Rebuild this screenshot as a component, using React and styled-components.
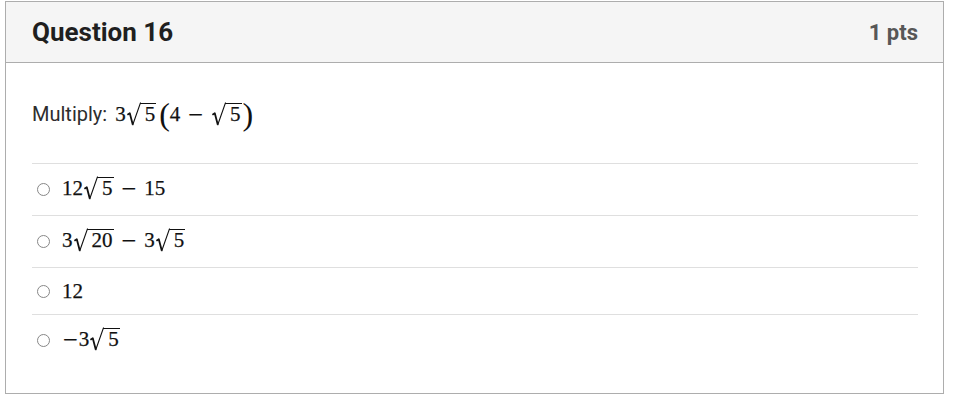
import React from 'react';
import styled, { createGlobalStyle } from 'styled-components';

const GlobalStyle = createGlobalStyle`
  html, body {
    margin: 0;
    padding: 0;
    background: #ffffff;
  }
  body {
    font-family: Roboto, "Liberation Sans", Arial, sans-serif;
    color: #2d2d2d;
  }
`;

// each answer is a list of math pieces: number, square root or binary operator
const ANSWERS = [
  { id: 'a', expr: [['n', '12'], ['sqrt', '5'], ['op', '−'], ['n', '15']] },
  { id: 'b', expr: [['n', '3'], ['sqrt', '20'], ['op', '−'], ['n', '3'], ['sqrt', '5']] },
  { id: 'c', expr: [['n', '12']] },
  { id: 'd', expr: [['neg', '−'], ['n', '3'], ['sqrt', '5']] },
];

function Sqrt({ children }) {
  return (
    <Radical>
      <RadicalSign viewBox="0 0 14 24" aria-hidden="true">
        <path
          d="M0.4 12.8 L2.8 11.2 L5.8 22.8"
          fill="none"
          stroke="#111"
          strokeWidth="1.8"
          strokeLinejoin="round"
        />
        <path d="M5.6 23.2 L13.4 1.1 L14 1.1" fill="none" stroke="#111" strokeWidth="1.1" />
      </RadicalSign>
      <Radicand>{children}</Radicand>
    </Radical>
  );
}

function Expr({ parts }) {
  return (
    <MathText>
      {parts.map(([kind, value], idx) => {
        if (kind === 'sqrt') return <Sqrt key={idx}>{value}</Sqrt>;
        if (kind === 'op') return <BinOp key={idx}>{value}</BinOp>;
        if (kind === 'neg') return <Minus key={idx}>{value}</Minus>;
        return <span key={idx}>{value}</span>;
      })}
    </MathText>
  );
}

export default function App() {
  return (
    <Page>
      <GlobalStyle />
      <Card>
        <Header>
          <Title>Question 16</Title>
          <Points>1 pts</Points>
        </Header>
        <Body>
          <Prompt>
            Multiply:{' '}
            <MathText>
              <span>3</span>
              <Sqrt>5</Sqrt>
              <Paren side="left">(</Paren>
              <span>4</span>
              <BinOp>−</BinOp>
              <Sqrt>5</Sqrt>
              <Paren side="right">)</Paren>
            </MathText>
          </Prompt>
          <Answers>
            {ANSWERS.map(a => (
              <AnswerRow key={a.id}>
                <Radio aria-hidden="true" />
                <Expr parts={a.expr} />
              </AnswerRow>
            ))}
          </Answers>
        </Body>
      </Card>
    </Page>
  );
}

const Page = styled.div`
  padding: 1px 14px 6px 5px;
`;

const Card = styled.div`
  border: 1px solid #adadad;
  background: #fff;
`;

const Header = styled.div`
  display: flex;
  align-items: center;
  justify-content: space-between;
  height: 60px;
  padding: 0 25px 0 26px;
  background: #f5f5f5;
  border-bottom: 1px solid #adadad;
`;

const Title = styled.h2`
  margin: 0;
  font-family: Roboto, "Liberation Sans", sans-serif;
  font-size: 26px;
  font-weight: 700;
  color: #1f1f1f;
`;

const Points = styled.div`
  font-family: Roboto, "Liberation Sans", sans-serif;
  font-size: 22px;
  font-weight: 700;
  color: #575757;
`;

const Body = styled.div`
  padding: 33px 25px 27px 26px;
`;

const Prompt = styled.div`
  font-size: 20px;
  line-height: 36px;
  color: #2d2d2d;
  white-space: nowrap;

  & > span {
    margin-left: 3px;
  }
`;

const MathText = styled.span`
  font-family: "Liberation Serif", "DejaVu Serif", serif;
  font-size: 21px;
  color: #111;
  white-space: nowrap;
  -webkit-text-stroke: 0.25px #111;
`;

const Radical = styled.span`
  display: inline-block;
  line-height: 22px;
  padding-bottom: 3px;
  margin-left: 1px;
`;

const RadicalSign = styled.svg`
  width: 14px;
  height: 24px;
  vertical-align: -5px;
`;

const Radicand = styled.span`
  display: inline-block;
  line-height: 21px;
  border-top: 1px solid #111;
  padding: 0 1px 0 5px;
  margin-left: -1px;
`;

const Minus = styled.span`
  display: inline-block;
  font-family: "DejaVu Serif", serif;
  font-size: 20px;
  -webkit-text-stroke: 0;
`;

const BinOp = styled(Minus)`
  margin: 0 7px;
`;

const Paren = styled.span`
  display: inline-block;
  font-size: 32px;
  line-height: 22px;
  vertical-align: -4px;
  -webkit-text-stroke: 0;
  margin: ${p => (p.side === 'left' ? '0 0 0 3px' : '0 0 0 1px')};
`;

const Answers = styled.ul`
  list-style: none;
  margin: 31px 0 0;
  padding: 0;
  border-top: 1px solid #dfdfdf;
`;

const AnswerRow = styled.li`
  display: flex;
  align-items: center;
  gap: 12px;
  padding: 12px 0 12px 5px;
  line-height: 22px;

  & + & {
    border-top: 1px solid #dfdfdf;
  }

  ${MathText} {
    line-height: 22px;
  }
`;

const Radio = styled.span`
  width: 11px;
  height: 11px;
  border: 1px solid #878787;
  border-radius: 50%;
  background: #fff;
  flex: 0 0 auto;
`;
